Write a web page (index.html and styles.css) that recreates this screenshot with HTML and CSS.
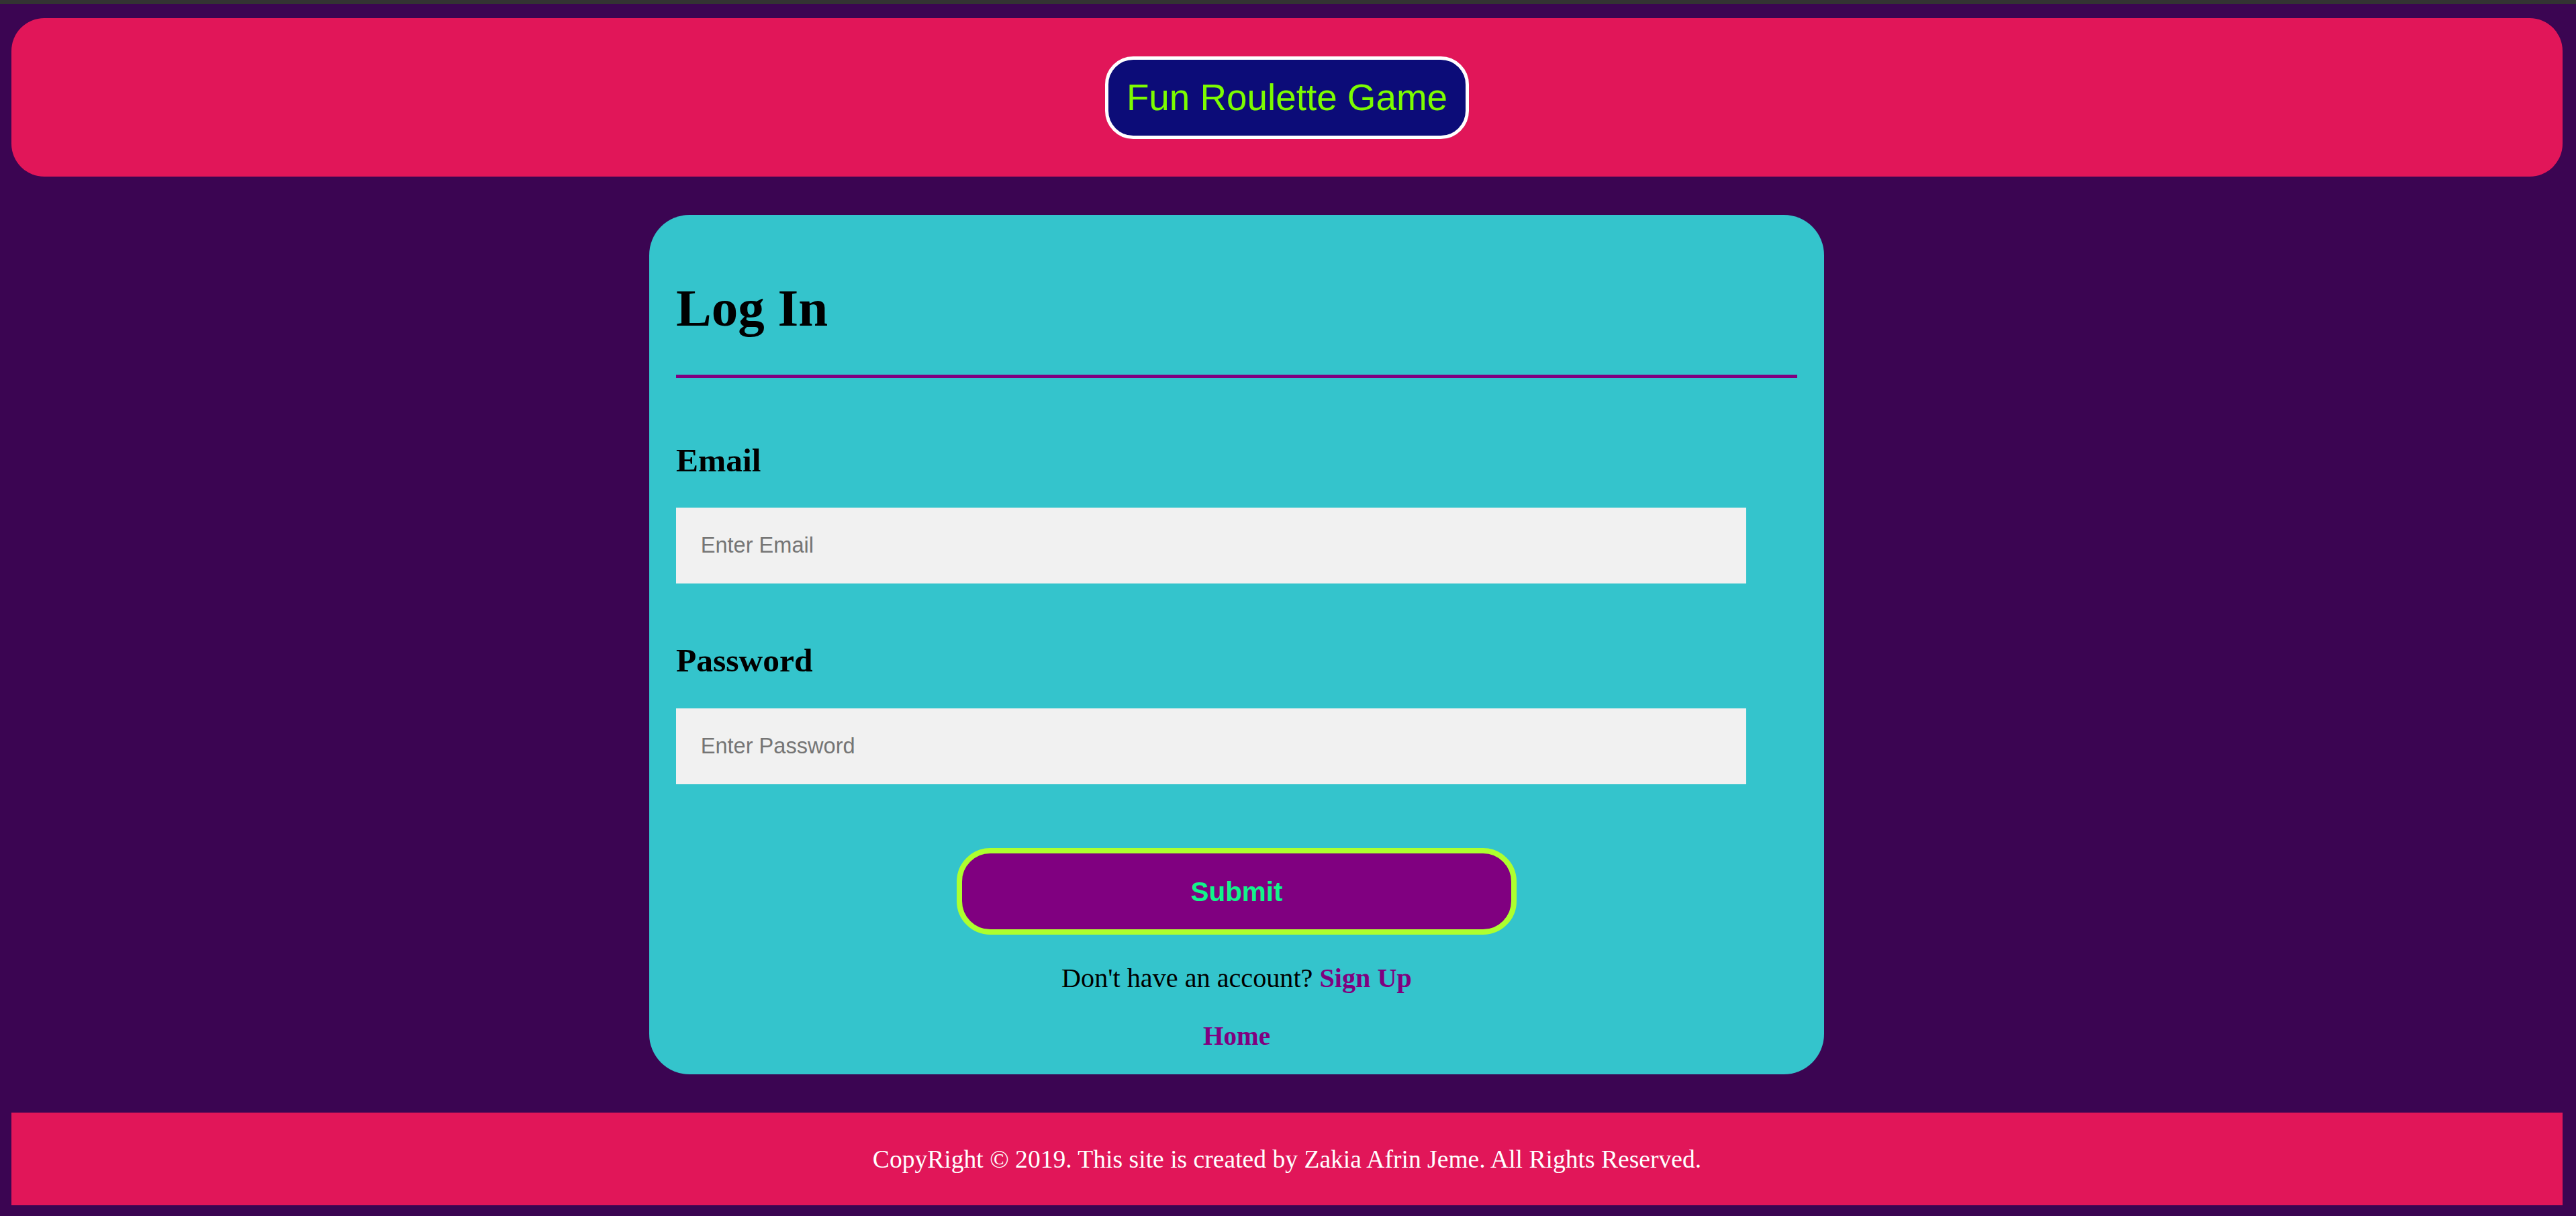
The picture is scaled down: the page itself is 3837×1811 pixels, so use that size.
FILE: index.html
```html
<!DOCTYPE html>
<html lang="en">
<head>
<meta charset="utf-8">
<title>Fun Roulette Game - Log In</title>
<link rel="stylesheet" href="styles.css">
</head>
<body>
<div class="topbar"></div>
<header class="site-header">
  <h1 class="brand">Fun Roulette Game</h1>
</header>
<main class="page">
  <form class="card" onsubmit="return false;">
    <h1 class="card-title">Log In</h1>
    <hr class="divider">
    <label class="field-label" for="email">Email</label>
    <input class="field-input" id="email" type="text" placeholder="Enter Email">
    <label class="field-label field-label-second" for="password">Password</label>
    <input class="field-input field-input-second" id="password" type="password" placeholder="Enter Password">
    <button class="submit" type="submit">Submit</button>
    <p class="signup">Don't have an account? <a class="link" href="#">Sign Up</a></p>
    <p class="home"><a class="link" href="#">Home</a></p>
  </form>
</main>
<footer class="site-footer">
  <p class="copy">CopyRight © 2019. This site is created by Zakia Afrin Jeme. All Rights Reserved.</p>
</footer>
</body>
</html>
```

FILE: styles.css
```css
html {
  background: #3b0552;
}

body {
  margin: 0;
  padding: 0 20px 16px 17px;
  background: #3b0552;
  font-family: "Liberation Serif", "Times New Roman", serif;
}

.topbar {
  height: 6px;
  margin: 0 -20px 0 -17px;
  background: #333333;
}

.site-header {
  margin-top: 21px;
  height: 236px;
  display: flex;
  align-items: center;
  justify-content: center;
  background: #e11659;
  border-radius: 49px;
}

.brand {
  margin: 0;
  padding: 25px 27px;
  line-height: 63px;
  font-family: "Liberation Sans", Arial, sans-serif;
  font-size: 54.8px;
  font-weight: normal;
  color: #7cfc00;
  background: #0c0c78;
  border: 5px solid #ffffff;
  border-radius: 42px;
}

.page {
  padding: 57px 0 57px 950px;
}

.card {
  box-sizing: border-box;
  width: 1750px;
  padding: 94.3px 40px 34.7px;
  display: flex;
  flex-direction: column;
  align-items: flex-start;
  background: #34c4cc;
  border-radius: 60px;
}

.card-title {
  margin: 0;
  font-size: 79px;
  line-height: 90px;
  font-weight: bold;
  color: #000000;
}

.divider {
  align-self: stretch;
  margin: 53.7px 0 0;
  height: 5px;
  border: none;
  background: #800080;
}

.field-label {
  display: block;
  margin-top: 93.8px;
  font-size: 49.5px;
  line-height: 57px;
  font-weight: bold;
  color: #000000;
}

.field-label-second {
  margin-top: 86.5px;
}

.field-input {
  box-sizing: border-box;
  width: 1594px;
  height: 113px;
  margin-top: 42.2px;
  padding: 0 36.7px;
  border: none;
  outline: none;
  background: #f1f1f1;
  font-family: "Liberation Sans", Arial, sans-serif;
  font-size: 32.6px;
  color: #000000;
}

.field-input-second {
  margin-top: 42.5px;
}

.field-input::placeholder {
  color: #757575;
}

.submit {
  align-self: center;
  box-sizing: border-box;
  width: 834px;
  margin-top: 95px;
  padding: 32.6px 0;
  line-height: 48px;
  border: 8px solid #adff2f;
  border-radius: 50px;
  background: #800080;
  color: #10f58a;
  font-family: "Liberation Sans", Arial, sans-serif;
  font-size: 40.4px;
  font-weight: bold;
  cursor: pointer;
}

.signup,
.home {
  align-self: stretch;
  margin: 42px 0 0;
  text-align: center;
  font-size: 40.2px;
  line-height: 45px;
  color: #000000;
}

.home {
  margin-top: 41.3px;
  font-size: 39.2px;
}

.link {
  color: #800080;
  font-weight: bold;
  text-decoration: none;
}

.site-footer {
  height: 138px;
  background: #e11659;
}

.copy {
  margin: 0;
  padding-top: 47.1px;
  text-align: center;
  font-size: 37.6px;
  line-height: 45px;
  color: #ffffff;
}
```
